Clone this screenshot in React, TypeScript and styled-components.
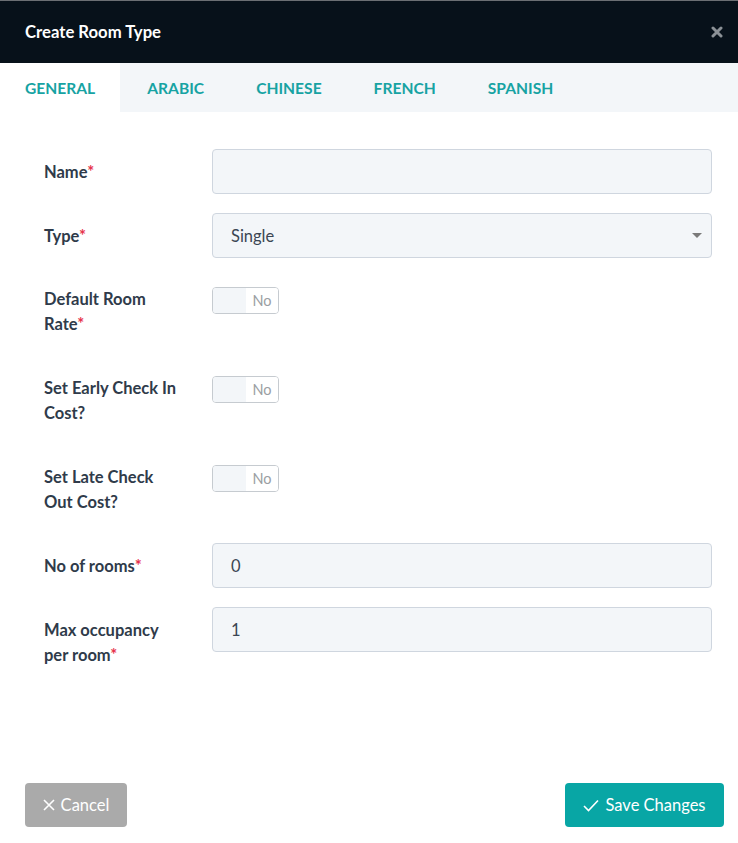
import React from "react";
import styled, { createGlobalStyle } from "styled-components";

const GlobalStyle = createGlobalStyle`
  html, body {
    margin: 0;
    padding: 0;
    background: #ffffff;
  }
  body {
    font-family: "Lato", "Open Sans", sans-serif;
  }
  * {
    box-sizing: border-box;
  }
`;

const Modal = styled.div`
  width: 738px;
  height: 843px;
  display: flex;
  flex-direction: column;
  background: #ffffff;
  border-top: 1px solid #6b6f73;
`;

const Header = styled.div`
  height: 62px;
  display: flex;
  align-items: center;
  justify-content: space-between;
  padding: 0 14px 0 25px;
  background: #07111a;
`;

const Title = styled.h4`
  margin: 0;
  color: #ffffff;
  font-size: 16.7px;
  font-weight: 700;
`;

const CloseButton = styled.button`
  border: none;
  background: transparent;
  padding: 0;
  width: 14px;
  height: 14px;
  display: flex;
  align-items: center;
  justify-content: center;
  cursor: pointer;
`;

const TabBar = styled.div`
  height: 49px;
  display: flex;
  background: #f3f6f9;
`;

const Tab = styled.div<{ $active?: boolean }>`
  display: flex;
  align-items: center;
  padding: 0 25px 0 ${({ $active }) => ($active ? "25px" : "27px")};
  background: ${({ $active }) => ($active ? "#ffffff" : "transparent")};
  color: #17a3a3;
  font-size: 15.6px;
  font-weight: 700;
  text-transform: uppercase;
`;

const Body = styled.div`
  flex: 1;
  padding: 37px 26px 0 44px;
`;

const Row = styled.div<{ $gap: number }>`
  display: flex;
  align-items: flex-start;
  margin-bottom: ${({ $gap }) => $gap}px;
`;

const Label = styled.label<{ $offset: number }>`
  width: 168px;
  flex-shrink: 0;
  padding-right: 31px;
  padding-top: ${({ $offset }) => $offset}px;
  color: #2f3b4a;
  font-size: 16.5px;
  font-weight: 700;
  line-height: 25px;
`;

const Req = styled.span`
  color: #e6334c;
`;

const TextInput = styled.div`
  flex: 1;
  height: 45px;
  display: flex;
  align-items: center;
  justify-content: space-between;
  padding: 0 18px;
  background: #f3f6f9;
  border: 1px solid #cfd6df;
  border-radius: 4px;
  color: #3b4653;
  font-size: 16.5px;
`;

const Caret = styled.span`
  width: 0;
  height: 0;
  border-left: 5px solid transparent;
  border-right: 5px solid transparent;
  border-top: 5px solid #7a7a7a;
  margin-right: -9px;
`;

const Toggle = styled.div`
  width: 67px;
  height: 27px;
  display: flex;
  border: 1px solid #c6cbd0;
  border-radius: 4px;
  overflow: hidden;
`;

const ToggleKnob = styled.span`
  width: 33px;
  background: #f3f6f9;
`;

const ToggleText = styled.span`
  flex: 1;
  display: flex;
  align-items: center;
  justify-content: center;
  background: #ffffff;
  color: #9a9ea3;
  font-size: 14.5px;
`;

const Footer = styled.div`
  display: flex;
  justify-content: space-between;
  padding: 0 14px 16px 25px;
`;

const Button = styled.button<{ $color: string; $width: number }>`
  width: ${({ $width }) => $width}px;
  height: 44px;
  display: flex;
  align-items: center;
  justify-content: center;
  gap: 6px;
  border: none;
  border-radius: 4px;
  background: ${({ $color }) => $color};
  color: #ffffff;
  font-family: "Lato", sans-serif;
  font-size: 16.5px;
  cursor: pointer;
`;

const tabs = ["General", "Arabic", "Chinese", "French", "Spanish"];

const ToggleField = () => (
  <Toggle>
    <ToggleKnob />
    <ToggleText>No</ToggleText>
  </Toggle>
);

export default function App() {
  return (
    <>
      <GlobalStyle />
      <Modal>
        <Header>
          <Title>Create Room Type</Title>
          <CloseButton aria-label="Close">
            <svg width="12" height="12" viewBox="0 0 12 12">
              <path d="M2 2 L10 10 M10 2 L2 10" stroke="#8b9196" strokeWidth="3" strokeLinecap="round" />
            </svg>
          </CloseButton>
        </Header>
        <TabBar>
          {tabs.map((t, i) => (
            <Tab key={t} $active={i === 0}>
              {t}
            </Tab>
          ))}
        </TabBar>
        <Body>
          <Row $gap={19}>
            <Label $offset={11}>
              Name<Req>*</Req>
            </Label>
            <TextInput />
          </Row>
          <Row $gap={29}>
            <Label $offset={11}>
              Type<Req>*</Req>
            </Label>
            <TextInput>
              Single
              <Caret />
            </TextInput>
          </Row>
          <Row $gap={39}>
            <Label $offset={0}>
              Default Room Rate<Req>*</Req>
            </Label>
            <ToggleField />
          </Row>
          <Row $gap={39}>
            <Label $offset={0}>Set Early Check In Cost?</Label>
            <ToggleField />
          </Row>
          <Row $gap={28}>
            <Label $offset={0}>Set Late Check Out Cost?</Label>
            <ToggleField />
          </Row>
          <Row $gap={19}>
            <Label $offset={11}>
              No of rooms<Req>*</Req>
            </Label>
            <TextInput>0</TextInput>
          </Row>
          <Row $gap={19}>
            <Label $offset={11}>
              Max occupancy per room<Req>*</Req>
            </Label>
            <TextInput>1</TextInput>
          </Row>
        </Body>
        <Footer>
          <Button $color="#aaaaaa" $width={102}>
            <svg width="12" height="12" viewBox="0 0 12 12">
              <path d="M1 1 L11 11 M11 1 L1 11" stroke="#ffffff" strokeWidth="1.6" />
            </svg>
            Cancel
          </Button>
          <Button $color="#08a6a5" $width={159}>
            <svg width="16" height="13" viewBox="0 0 16 13">
              <path d="M1 7 L5.5 11.5 L15 1.5" stroke="#ffffff" strokeWidth="1.6" fill="none" />
            </svg>
            Save Changes
          </Button>
        </Footer>
      </Modal>
    </>
  );
}
